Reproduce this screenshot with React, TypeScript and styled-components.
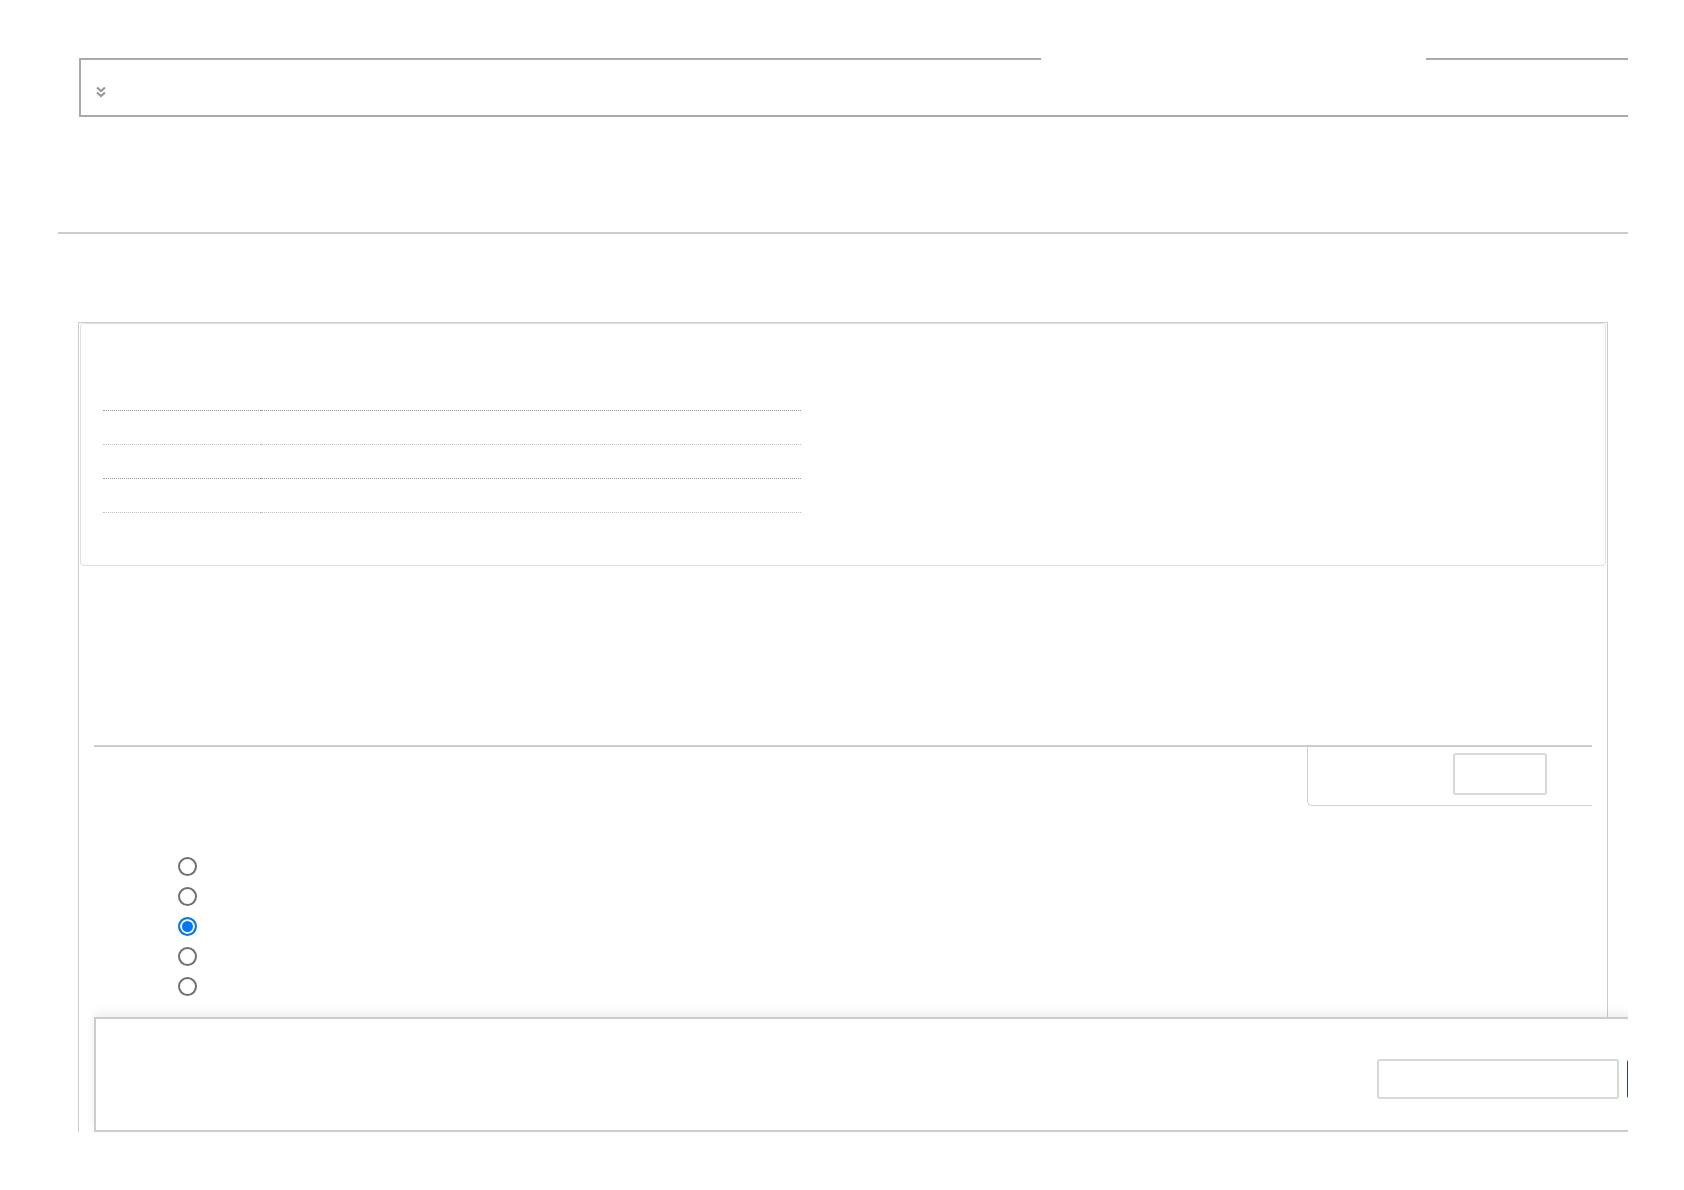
import React, { useState } from 'react';
import styled, { createGlobalStyle } from 'styled-components';

const GlobalStyle = createGlobalStyle`
  html, body {
    margin: 0;
    padding: 0;
    background: #fff;
    font-family: "Liberation Sans", Arial, sans-serif;
  }
`;

const Page = styled.div`
  width: 1570px;
  margin-left: 58px;
  padding-top: 58px;
  overflow: hidden;
  min-height: 1132px;
`;

const FilterBar = styled.div`
  margin-left: 21px;
  display: flex;
  flex-direction: column;
  border-left: 2px solid #aaa;
  border-bottom: 2px solid #aaa;
`;

const TopEdge = styled.div`
  display: flex;
  height: 2px;
`;

const EdgeLine = styled.div<{ $width?: number }>`
  height: 2px;
  background: #aaa;
  ${(p) => (p.$width ? `width: ${p.$width}px;` : 'flex: 1;')}
`;

const Notch = styled.div`
  width: 385px;
`;

const BarBody = styled.div`
  height: 55px;
  display: flex;
  align-items: center;
  padding: 9px 0 0 14px;
  box-sizing: border-box;
`;

const ToggleButton = styled.button`
  border: none;
  background: none;
  padding: 0;
  display: flex;
  color: #999;
  cursor: pointer;
`;

const Divider = styled.hr`
  margin: 115px 0 0;
  border: none;
  height: 2px;
  background: #ccc;
`;

const Outer = styled.section`
  margin: 88px 0 0 20px;
  width: 1530px;
  box-sizing: border-box;
  border: 1px solid #ccc;
  border-bottom: none;
  display: flex;
  flex-direction: column;
`;

const SummaryPanel = styled.div`
  margin: 0 1px;
  border: 1px solid #e0e0e0;
  border-radius: 4px;
  padding: 53px 22px 52px;
`;

const InfoTable = styled.table`
  border-collapse: collapse;
  width: 698px;

  td {
    height: 33px;
    padding: 0;
    border-bottom: 1px dotted #9a9a9a;
  }
  td:first-child {
    width: 158px;
  }
  tr:nth-child(even) td {
    border-bottom-color: #bdbdbd;
  }
`;

const ActionSection = styled.div`
  margin: 179px 15px 0;
  display: flex;
  flex-direction: column;
`;

const Rule = styled.div`
  height: 2px;
  background: #ccc;
`;

const ActionTab = styled.div`
  align-self: flex-end;
  width: 285px;
  height: 59px;
  box-sizing: border-box;
  border-left: 1px solid #d0d0d0;
  border-bottom: 1px solid #d0d0d0;
  border-radius: 0 0 0 5px;
  display: flex;
  justify-content: flex-end;
  align-items: flex-start;
  padding: 6px 45px 0 0;
`;

const GhostButton = styled.button`
  width: 94px;
  height: 42px;
  box-sizing: border-box;
  border: 2px solid #d8d8d8;
  border-radius: 3px;
  background: #fff;
`;

const RadioList = styled.div`
  margin: 51px 0 0 99px;
  display: flex;
  flex-direction: column;
  gap: 11px;
`;

const Radio = styled.input.attrs({ type: 'radio' })`
  appearance: none;
  margin: 0;
  width: 19px;
  height: 19px;
  box-sizing: border-box;
  border: 2px solid #707070;
  border-radius: 50%;
  background: #fff;
  cursor: pointer;

  &:checked {
    border: 2px solid #0075ff;
    background: #0075ff;
    box-shadow: inset 0 0 0 2px #fff;
  }
`;

const FooterPanel = styled.div`
  margin: 21px 0 0 15px;
  width: 1640px;
  height: 115px;
  box-sizing: border-box;
  border: 2px solid #ccc;
  background: #fff;
  box-shadow: 0 -4px 10px rgba(0, 0, 0, 0.07);
  display: flex;
  align-items: flex-start;
  gap: 8px;
  padding: 40px 0 0 1281px;
`;

const SearchInput = styled.input`
  width: 242px;
  height: 40px;
  box-sizing: border-box;
  border: 2px solid #d8d8d8;
  border-radius: 3px;
  outline: none;
`;

const PrimaryButton = styled.button`
  width: 90px;
  height: 40px;
  border: 1.5px solid #2b3d8f;
  border-radius: 3px;
  background: #fff;
`;

const DoubleChevron = () => (
  <svg width="12" height="12" viewBox="0 0 12 12" fill="none" stroke="currentColor" strokeWidth="2.2">
    <polyline points="2,1.5 6,5 10,1.5" />
    <polyline points="2,6.5 6,10 10,6.5" />
  </svg>
);

export default function App() {
  const [choice, setChoice] = useState(2);
  const rows = [0, 1, 2, 3];

  return (
    <>
      <GlobalStyle />
      <Page>
        <FilterBar>
          <TopEdge>
            <EdgeLine $width={960} />
            <Notch />
            <EdgeLine />
          </TopEdge>
          <BarBody>
            <ToggleButton aria-label="toggle">
              <DoubleChevron />
            </ToggleButton>
          </BarBody>
        </FilterBar>

        <Divider />

        <Outer>
          <SummaryPanel>
            <InfoTable>
              <tbody>
                {rows.map((r) => (
                  <tr key={r}>
                    <td></td>
                    <td></td>
                  </tr>
                ))}
              </tbody>
            </InfoTable>
          </SummaryPanel>

          <ActionSection>
            <Rule />
            <ActionTab>
              <GhostButton />
            </ActionTab>
          </ActionSection>

          <RadioList>
            {[0, 1, 2, 3, 4].map((i) => (
              <Radio
                key={i}
                name="option"
                checked={choice === i}
                onChange={() => setChoice(i)}
              />
            ))}
          </RadioList>

          <FooterPanel>
            <SearchInput />
            <PrimaryButton />
          </FooterPanel>
        </Outer>
      </Page>
    </>
  );
}
